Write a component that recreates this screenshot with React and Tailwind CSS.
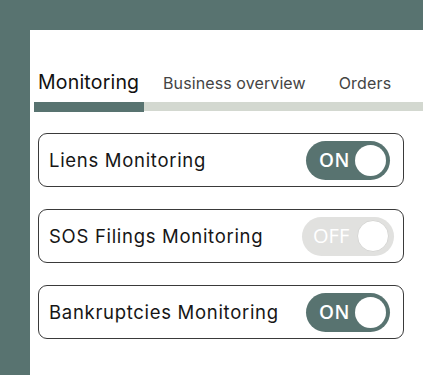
import React from "react";

const labelFont = { fontFamily: "Inter, 'Liberation Sans', sans-serif" };

function OnToggle() {
  return (
    <div className="flex h-[39px] w-[84px] items-center justify-between rounded-full bg-[#587370] pl-[13px] pr-[4px]">
      <span
        className="text-[19px] font-semibold leading-none tracking-[0.5px] text-white"
        style={{ fontFamily: "'Open Sans', sans-serif" }}
      >
        ON
      </span>
      <span className="h-[31px] w-[31px] rounded-full bg-white" />
    </div>
  );
}

function OffToggle() {
  return (
    <div className="flex h-[39px] w-[92px] items-center justify-between rounded-full bg-[#e1e1df] pl-[11px] pr-[5px]">
      <span
        className="text-[20px] font-normal leading-none text-white"
        style={{ fontFamily: "'Open Sans', sans-serif" }}
      >
        OFF
      </span>
      <span className="h-[32px] w-[32px] rounded-full border border-[#d6d6d4] bg-white" />
    </div>
  );
}

function Card({ label, on, pr }) {
  return (
    <div
      className={`flex h-[54px] items-center justify-between rounded-[9px] border border-[#3a3a3a] pl-[10px] ${pr}`}
    >
      <span className="pt-[2px] text-[18.5px] tracking-[0.7px] text-[#161616]" style={labelFont}>
        {label}
      </span>
      {on ? <OnToggle /> : <OffToggle />}
    </div>
  );
}

export default function App() {
  return (
    <div className="flex h-[375px] w-[423px] bg-[#587370] pl-[30px] pt-[30px]">
      <div className="flex flex-1 flex-col bg-white pl-[4px]">
        <div className="mt-[41px] flex h-[24px] items-center" style={labelFont}>
          <div className="w-[110px] pl-[4px] text-[19.5px] leading-none tracking-[0.2px] text-[#111]">Monitoring</div>
          <div className="ml-[19px] text-[16px] leading-none tracking-[0.1px] text-[#444]">Business overview</div>
          <div className="ml-[33px] text-[16px] leading-none tracking-[0.2px] text-[#444]">Orders</div>
        </div>
        <div className="mt-[7px] flex h-[9px] bg-[#d3d8d0]">
          <div className="h-[10px] w-[110px] bg-[#587370]" />
        </div>
        <div className="ml-[4px] mr-[19px] mt-[22px] flex flex-col gap-[22px]">
          <Card label="Liens Monitoring" on pr="pr-[13px]" />
          <Card label="SOS Filings Monitoring" on={false} pr="pr-[9px]" />
          <Card label="Bankruptcies Monitoring" on pr="pr-[13px]" />
        </div>
      </div>
    </div>
  );
}
